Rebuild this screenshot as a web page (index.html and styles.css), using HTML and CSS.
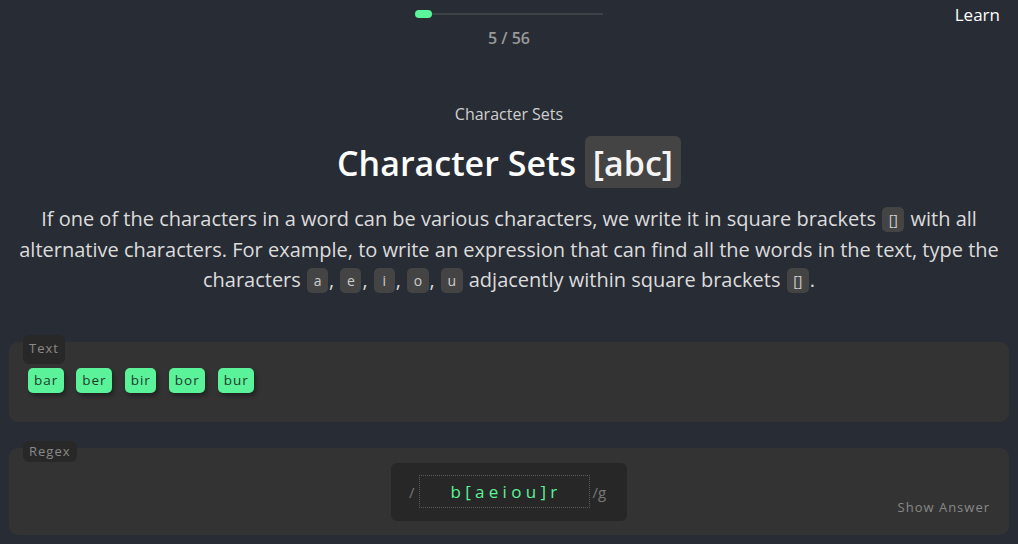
FILE: index.html
```html
<!DOCTYPE html>
<html>
<head>
<meta charset="utf-8">
<link rel="stylesheet" href="styles.css">
</head>
<body>
<header class="top">
  <div class="progress">
    <div class="track"><div class="fill"></div></div>
    <div class="count">5 / 56</div>
  </div>
  <a class="learn">Learn</a>
</header>
<main class="lesson">
  <div class="subtitle">Character Sets</div>
  <h1 class="title">Character Sets <code class="code-big">[abc]</code></h1>
  <p class="desc">If one of the characters in a word can be various characters, we write it in square brackets <code class="c">[]</code> with all alternative characters. For example, to write an expression that can find all the words in the text, type the characters <code class="c">a</code>, <code class="c">e</code>, <code class="c">i</code>, <code class="c">o</code>, <code class="c">u</code> adjacently within square brackets <code class="c">[]</code>.</p>
</main>
<section class="card text-card">
  <span class="label label-text">Text</span>
  <div class="tags">
    <span class="tag">bar</span>
    <span class="tag">ber</span>
    <span class="tag">bir</span>
    <span class="tag">bor</span>
    <span class="tag">bur</span>
  </div>
</section>
<section class="card regex-card">
  <span class="label label-regex">Regex</span>
  <div class="regex-row">
    <div class="regex-box">
      <span class="slash">/</span>
      <div class="input">b[aeiou]r</div>
      <span class="flag">/g</span>
    </div>
  </div>
  <span class="show">Show Answer</span>
</section>
</body>
</html>
```
FILE: styles.css
```css
html, body {
  margin: 0;
  padding: 0;
}
body {
  background: #282c35;
  font-family: "Open Sans", "Noto Sans", sans-serif;
  color: #e0e0e0;
  width: 1018px;
  height: 544px;
  overflow: hidden;
  position: relative;
}
.top {
  display: flex;
  justify-content: center;
  position: relative;
  padding-top: 9px;
}
.progress {
  display: flex;
  flex-direction: column;
  align-items: center;
  width: 188px;
}
.track {
  width: 188px;
  height: 2px;
  background: #3d4145;
  margin-top: 4px;
  position: relative;
}
.fill {
  position: absolute;
  left: 0;
  top: -3px;
  width: 17px;
  height: 8px;
  border-radius: 4px;
  background: #5af598;
}
.count {
  margin-top: 12px;
  font-size: 16px;
  font-weight: 600;
  color: #9a9a9a;
  line-height: 22px;
}
.learn {
  position: absolute;
  right: 18px;
  top: 3px;
  font-size: 17px;
  color: #ffffff;
  line-height: 24px;
}
.lesson {
  text-align: center;
  padding: 0 16px;
}
.subtitle {
  margin-top: 54px;
  font-size: 16px;
  color: #cfcfcf;
  line-height: 22px;
}
.title {
  margin: 12px 0 0;
  font-size: 34px;
  font-weight: 600;
  color: #ffffff;
  line-height: 52px;
}
.code-big {
  font-family: "Open Sans", sans-serif;
  font-weight: 600;
  background: #444444;
  border-radius: 6px;
  padding: 4px 8px 2px;
  color: #f4f4f4;
}
.desc {
  margin: 15px 0 0;
  font-size: 20px;
  line-height: 30.5px;
  color: #dcdcdc;
}
.c {
  display: inline-block;
  vertical-align: middle;
  font-family: "Open Sans", sans-serif;
  font-size: 14px;
  line-height: 25px;
  height: 25px;
  min-width: 8px;
  background: #444444;
  border-radius: 5px;
  padding: 0 6.5px;
  margin: -3px 1px 0;
  color: #cccccc;
  box-sizing: content-box;
}
.card {
  margin: 0 9px;
  background: #333333;
  border-radius: 9px;
  position: relative;
}
.text-card {
  margin-top: 46px;
  height: 80px;
  padding: 26px 19px 0;
  box-sizing: border-box;
}
.label {
  position: absolute;
  left: 14px;
  top: -7px;
  background: #282828;
  border-radius: 6px;
  font-size: 13px;
  letter-spacing: 1px;
  color: #8a8a8a;
  line-height: 16px;
}
.label-text {
  padding: 5px 6px 8px;
}
.label-regex {
  padding: 2px 6px 3px;
}
.tags {
  display: flex;
  gap: 12.5px;
}
.tag {
  background: #5bf39a;
  color: #1f3b2a;
  border-radius: 5px;
  font-size: 13.5px;
  letter-spacing: 1px;
  padding: 3px 5.5px 3px 6px;
  line-height: 19px;
  box-shadow: 2px 3px 4px rgba(0,0,0,0.35);
}
.regex-card {
  margin-top: 26px;
  height: 87px;
}
.regex-row {
  display: flex;
  justify-content: center;
  padding-top: 15px;
}
.regex-box {
  display: flex;
  align-items: center;
  background: #272727;
  border-radius: 6px;
  width: 236px;
  height: 58px;
  box-sizing: border-box;
  padding: 0 0 0 18px;
}
.slash, .flag {
  color: #777;
  font-size: 15px;
  font-family: "Open Sans", sans-serif;
}
.input {
  width: 171px;
  height: 33px;
  box-sizing: border-box;
  border: 1px dotted #5a5a5a;
  margin-left: 4px;
  margin-right: 3px;
  color: #5af598;
  font-family: "Open Sans", sans-serif;
  font-size: 17px;
  letter-spacing: 4.3px;
  text-align: center;
  line-height: 31px;
  padding-left: 4px;
}
.show {
  position: absolute;
  right: 19px;
  bottom: 19px;
  font-size: 13px;
  letter-spacing: 1px;
  color: #888;
}
```
